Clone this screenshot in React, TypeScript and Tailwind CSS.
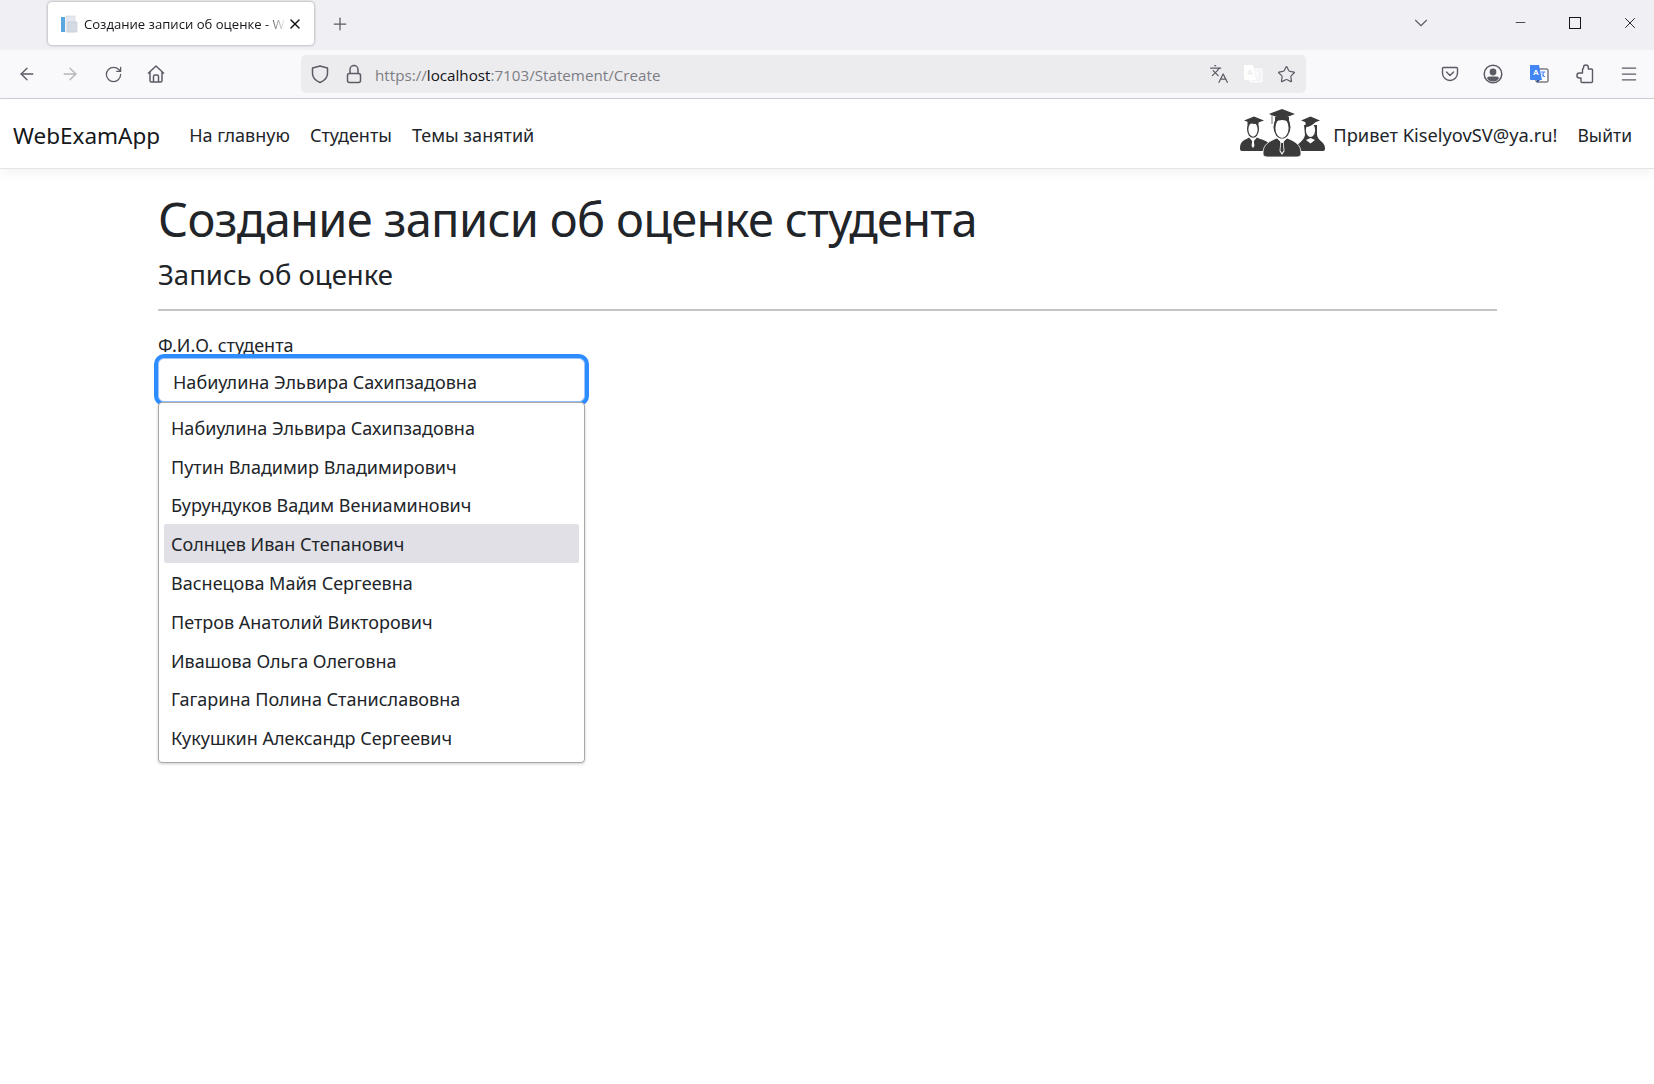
import * as React from "react";
import {
  ArrowLeft,
  ArrowRight,
  ChevronDown,
  Languages,
  Menu,
  Minus,
  Plus,
  RotateCw,
  Star,
  X,
} from "lucide-react";

const students = [
  "Набиулина Эльвира Сахипзадовна",
  "Путин Владимир Владимирович",
  "Бурундуков Вадим Вениаминович",
  "Солнцев Иван Степанович",
  "Васнецова Майя Сергеевна",
  "Петров Анатолий Викторович",
  "Ивашова Ольга Олеговна",
  "Гагарина Полина Станиславовна",
  "Кукушкин Александр Сергеевич",
];

const GraduatesLogo = () => (
  <svg width="85" height="50" viewBox="0 0 85 50" className="shrink-0 -mt-[3px]">
    {/* левая фигура */}
    <path d="M0 39 C0 32 5 31 9 28.5 L13 33 L17 28.5 C22 31 30 32 32 39 L32 42 L2 42 Q0 42 0 40 Z" fill="#3a3a3a" />
    <ellipse cx="13" cy="20" rx="6" ry="8.8" fill="#3a3a3a" />
    <ellipse cx="13" cy="20.5" rx="4.6" ry="7.2" fill="#fff" />
    <path d="M7.5 16 Q13 12.5 18.5 16 L18.5 12 L7.5 12 Z" fill="#3a3a3a" />
    <path d="M4 11.5 L14 7.5 L24 11.5 L14 15 Z" fill="#3a3a3a" />
    <path d="M12.2 31.5 H13.8 L14.4 37 L13 39 L11.6 37 Z" fill="#fff" />
    {/* правая фигура */}
    <path d="M54 42 C56 34 64 33 65 26 L64 16 L77 16 L77 26 C78 32 85 33 85 39 L85 40 Q85 42 83 42 Z" fill="#3a3a3a" />
    <ellipse cx="70.5" cy="21" rx="4.6" ry="7" fill="#fff" />
    <path d="M65.5 18 Q71 18 75.5 13 L75.5 12 L65.5 12 Z" fill="#3a3a3a" />
    <path d="M61 11.5 L70.5 7.5 L80 11.5 L70.5 15 Z" fill="#3a3a3a" />
    <path d="M66 31 L70.5 34.5 L75 31 L70.5 29 Z" fill="#fff" />
    {/* центральная фигура */}
    <path d="M23 44 C23 35 30 32 37 29 L42 34 L47 29 C54 32 61 35 61 44 L61 45 Q61 48 57 48 L27 48 Q23 48 23 45 Z" fill="#3a3a3a" stroke="#fff" strokeWidth="0.8" />
    <path d="M40.5 32 H43.5 L44.5 42 L42 46 L39.5 42 Z" fill="#fff" />
    <path d="M41 34 H43 L43.6 41.5 L42 44 L40.4 41.5 Z" fill="#3a3a3a" />
    <ellipse cx="42" cy="18" rx="8.5" ry="11.5" fill="#3a3a3a" />
    <ellipse cx="42" cy="19" rx="6.6" ry="10" fill="#fff" />
    <path d="M35 13 Q42 9 49 13 L49 8 L35 8 Z" fill="#3a3a3a" />
    <path d="M29 5 L42 0 L55 5 L42 10 Z" fill="#3a3a3a" />
    <path d="M32 6 V15" stroke="#8a8a8a" strokeWidth="1.2" />
  </svg>
);

const TranslateBadge = ({ faded }: { faded?: boolean }) => (
  <svg width="20" height="20" viewBox="0 0 20 20">
    <rect x="7" y="5" width="12" height="13" rx="1" fill={faded ? "#f4f4f6" : "#fff"} stroke={faded ? "#fff" : "#3a3a44"} strokeWidth="1" />
    <path d="M12 8 L16.5 8 M14.2 8 L14.2 13 M12.5 10 L16 13" stroke={faded ? "#fff" : "#4285f4"} strokeWidth="1" fill="none" />
    <path d="M1 1.5 Q1 1 1.5 1 L10 1 L13 16 L2 16 Q1 16 1 15 Z" fill={faded ? "#fff" : "#4285f4"} />
    <text x="4" y="11" fontSize="8" fontWeight="700" fill={faded ? "#ececee" : "#fff"} fontFamily="'Liberation Sans', sans-serif">A</text>
    {!faded && <path d="M8 16 L11 16 L8 19 Z" fill="#2a56a8" />}
  </svg>
);

const Pocket = () => (
  <svg width="18" height="18" viewBox="0 0 18 18" fill="none" stroke="#5b5b66" strokeWidth="1.4">
    <path d="M2.5 2.5 H15.5 Q16.5 2.5 16.5 3.5 V8 A7.5 7.5 0 0 1 1.5 8 V3.5 Q1.5 2.5 2.5 2.5 Z" />
    <path d="M5.5 7 L9 10.5 L12.5 7" strokeLinecap="round" strokeLinejoin="round" />
  </svg>
);

const Account = () => (
  <svg width="20" height="20" viewBox="0 0 20 20">
    <circle cx="10" cy="10" r="8.8" fill="none" stroke="#5b5b66" strokeWidth="1.5" />
    <circle cx="10" cy="8" r="3.4" fill="#5b5b66" />
    <path d="M3.8 14 Q5 12.6 7 12.6 H13 Q15 12.6 16.2 14 Q14 17.6 10 17.6 Q6 17.6 3.8 14 Z" fill="#5b5b66" />
  </svg>
);

const Extension = () => (
  <svg width="18" height="20" viewBox="0 0 18 20" fill="none" stroke="#5b5b66" strokeWidth="1.4" strokeLinejoin="round">
    <path d="M7.5 4.5 V3.4 A2.4 2.4 0 0 1 12.3 3.4 V5 H15.5 Q16.5 5 16.5 6 V17.5 Q16.5 18.5 15.5 18.5 H6 Q5 18.5 5 17.5 V14 H3.4 A2.5 2.5 0 0 1 3.4 9 H6.5 V5.5 Q6.5 4.5 7.5 4.5 Z" />
  </svg>
);

const HomeIcon = () => (
  <svg width="20" height="20" viewBox="0 0 20 20" fill="none" stroke="#5b5b66" strokeWidth="1.5" strokeLinejoin="round">
    <path d="M2 9.5 L10 2 L18 9.5 M4 8 V16.5 Q4 18 5.5 18 H14.5 Q16 18 16 16.5 V8" />
    <path d="M7.5 18 V12.5 Q7.5 11 9 11 H11 Q12.5 11 12.5 12.5 V18" />
  </svg>
);

const ShieldIcon = () => (
  <svg width="20" height="20" viewBox="0 0 20 20" fill="none" stroke="#5b5b66" strokeWidth="1.5" strokeLinejoin="round">
    <path d="M10 2 L17.5 4 V9.5 C17.5 14 13.5 17 10 18.5 C6.5 17 2.5 14 2.5 9.5 V4 Z" />
  </svg>
);

const LockIcon = () => (
  <svg width="18" height="20" viewBox="0 0 18 20" fill="none" stroke="#5b5b66" strokeWidth="1.5">
    <rect x="2.5" y="9.5" width="13" height="9" rx="2" />
    <path d="M5 9.5 V5.5 A4 4 0 0 1 13 5.5 V9.5" />
  </svg>
);

const PageIcon = () => (
  <svg width="18" height="18" viewBox="0 0 18 18">
    <rect x="1" y="2" width="4" height="15" fill="#5aa7e0" />
    <rect x="6" y="1" width="9" height="16" fill="#e4e8ee" stroke="#c8cdd4" strokeWidth="0.5" />
    <rect x="8" y="7" width="9" height="10" fill="#d5dbe3" stroke="#b9c0c9" strokeWidth="0.5" />
  </svg>
);

const App = () => {
  return (
    <div className="w-[1654px] h-[1084px] overflow-hidden bg-white text-[#212529] font-['Noto_Sans',sans-serif]">
      {/* вкладки */}
      <div className="h-[50px] bg-[#f0f0f4] flex items-start pl-[48px] pr-[15px]">
        <div className="mt-[2px] w-[266px] h-[43px] bg-white rounded-[4px] shadow-[0_0_3px_rgba(0,0,0,0.4)] flex items-center pl-[12px] pr-[11px]">
          <PageIcon />
          <span className="ml-[6px] w-[202px] overflow-hidden whitespace-nowrap pt-[2px] text-[13.1px] text-[#15141a] font-['Open_Sans',sans-serif] [mask-image:linear-gradient(to_right,black_90%,transparent)]">
            Создание записи об оценке - WebExamApp
          </span>
          <X size={16} strokeWidth={2.2} className="ml-auto text-[#15141a]" />
        </div>
        <Plus size={20} strokeWidth={1.5} className="ml-[16px] mt-[14px] text-[#5b5b66]" />
        <ChevronDown size={22} strokeWidth={1.2} className="ml-auto mt-[12px] text-[#5b5b66]" />
        <Minus size={15} strokeWidth={1.2} className="ml-[81px] mt-[15px] text-[#15141a]" />
        <div className="ml-[41px] mt-[17px] w-[12px] h-[12px] border border-[#15141a]" />
        <X size={18} strokeWidth={1.2} className="ml-[40px] mt-[14px] text-[#15141a]" />
      </div>

      {/* панель браузера */}
      <div className="h-[49px] bg-[#f9f9fb] border-b border-[#cfcfd8] flex items-center text-[#5b5b66]">
        <ArrowLeft size={20} strokeWidth={1.6} className="ml-[17px]" />
        <ArrowRight size={20} strokeWidth={1.6} className="ml-[23px] text-[#b4b4bb]" />
        <RotateCw size={19} strokeWidth={1.6} className="ml-[24px]" />
        <span className="ml-[23px] flex"><HomeIcon /></span>
        <div className="ml-[135px] w-[1005px] h-[38px] bg-[#ececee] rounded-[5px] flex items-center pl-[9px] pr-[10px]">
          <ShieldIcon />
          <span className="ml-[15px] flex"><LockIcon /></span>
          <span className="ml-[12px] pt-[2px] text-[15.2px] text-[#7d7d85] font-['Open_Sans',sans-serif]">
            https://<span className="text-[#15141a]">localhost</span>:7103/Statement/Create
          </span>
          <Languages size={20} strokeWidth={1.5} className="ml-auto" />
          <span className="ml-[14px] flex"><TranslateBadge faded /></span>
          <Star size={19} strokeWidth={1.5} className="ml-[14px]" />
        </div>
        <span className="ml-[135px] flex"><Pocket /></span>
        <span className="ml-[24px] flex"><Account /></span>
        <span className="ml-[26px] flex"><TranslateBadge /></span>
        <span className="ml-[27px] flex"><Extension /></span>
        <Menu size={20} strokeWidth={1.5} className="ml-[25px]" />
      </div>

      {/* навбар */}
      <nav className="h-[70px] bg-white border-b border-[#e4e4e4] shadow-[0_4px_12px_rgba(0,0,0,0.05)] flex items-center pt-[4px] pl-[13px] pr-[22px] text-[18px]">
        <span className="text-[22.5px] text-[#15181b]">WebExamApp</span>
        <a className="ml-[29px]">На главную</a>
        <a className="ml-[20px]">Студенты</a>
        <a className="ml-[20px]">Темы занятий</a>
        <div className="ml-auto flex items-center">
          <GraduatesLogo />
          <span className="ml-[8px] -mt-[2px] text-[18.3px]">Привет KiselyovSV@ya.ru!</span>
          <a className="ml-[20px] text-[17.5px]">Выйти</a>
        </div>
      </nav>

      {/* страница */}
      <main className="mx-[158px] w-[1339px] pt-[20px]">
        <h1 className="text-[47px] leading-[60px] tracking-[-0.7px]">Создание записи об оценке студента</h1>
        <h2 className="text-[27.5px] leading-[36px] mt-[8px]">Запись об оценке</h2>
        <hr className="mt-[16px] border-t-2 border-[#c4c4c4]" />
        <label className="block mt-[22px] text-[18px] leading-[24px]">Ф.И.О. студента</label>
        <div className="relative w-[427px] mt-[1px]">
          <div className="h-[44px] rounded-[6px] border border-[#9ec5fe] bg-white flex items-center pt-[4px] pl-[14px] text-[18px] shadow-[0_0_0_4px_#2d8cff]">
            {students[0]}
          </div>
          <div className="absolute left-0 top-[44px] w-[427px] h-[361px] bg-white border border-[#a8a8a8] rounded-[4px] shadow-[0_1px_3px_rgba(0,0,0,0.2)] px-[5px] py-[6px] flex flex-col justify-center text-[18px]">
            {students.map((name, i) => (
              <div
                key={name}
                className={"h-[38.8px] shrink-0 flex items-center pt-[2px] pl-[7px] rounded-[2px] " + (i === 3 ? "bg-[#e0e0e6]" : "")}
              >
                {name}
              </div>
            ))}
          </div>
        </div>
      </main>
    </div>
  );
};

export default App;
